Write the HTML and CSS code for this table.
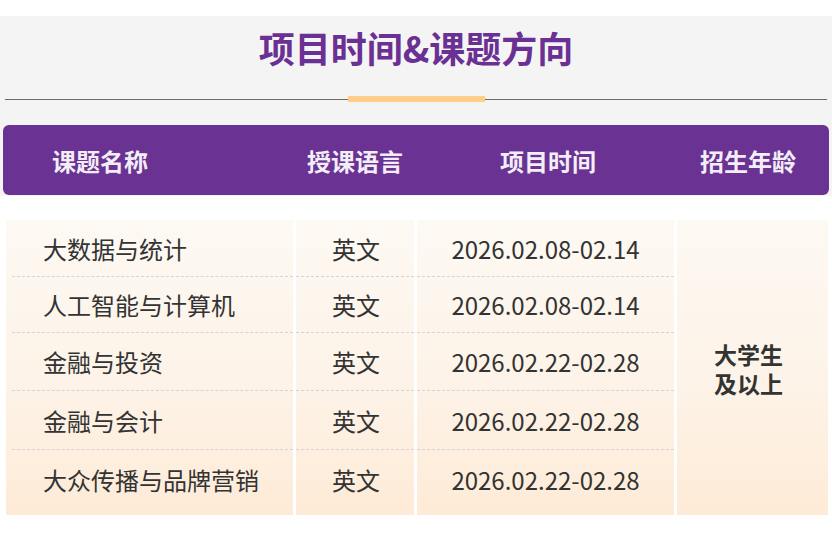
FILE: index.html
```html
<!DOCTYPE html>
<html lang="zh-CN">
<head>
<meta charset="utf-8">
<title>项目时间&amp;课题方向</title>
<link rel="stylesheet" href="styles.css">
</head>
<body>
<section class="intro">
  <h1 class="title">项目时间&amp;课题方向</h1>
  <div class="divider"><span class="divider-line"></span><span class="divider-bar"></span><span class="divider-line"></span></div>
  <div class="head-bar">
    <div class="head-cell">课题名称</div>
    <div class="head-cell">授课语言</div>
    <div class="head-cell">项目时间</div>
    <div class="head-cell">招生年龄</div>
  </div>
</section>
<div class="schedule">
  <div class="col col-name">
    <div class="cell r1">大数据与统计</div>
    <div class="cell r2">人工智能与计算机</div>
    <div class="cell r3">金融与投资</div>
    <div class="cell r4">金融与会计</div>
    <div class="cell r5">大众传播与品牌营销</div>
  </div>
  <div class="col col-lang">
    <div class="cell r1">英文</div>
    <div class="cell r2">英文</div>
    <div class="cell r3">英文</div>
    <div class="cell r4">英文</div>
    <div class="cell r5">英文</div>
  </div>
  <div class="col col-date">
    <div class="cell r1">2026.02.08-02.14</div>
    <div class="cell r2">2026.02.08-02.14</div>
    <div class="cell r3">2026.02.22-02.28</div>
    <div class="cell r4">2026.02.22-02.28</div>
    <div class="cell r5">2026.02.22-02.28</div>
  </div>
  <div class="col col-age">
    <div class="age">
      <div class="age-line">大学生</div>
      <div class="age-line">及以上</div>
    </div>
  </div>
</div>
</body>
</html>
```

FILE: styles.css
```css
* { box-sizing: border-box; }
html, body { margin: 0; padding: 0; background: #ffffff; }
body {
  width: 832px;
  height: 550px;
  overflow: hidden;
  font-family: "Noto Sans CJK SC", "Noto Sans", sans-serif;
  color: #333333;
}
.intro {
  margin-top: 16px;
  background: #f4f4f4;
  padding: 9px 0 1px;
}
.title {
  margin: 0;
  text-align: center;
  font-size: 36px;
  line-height: 44px;
  font-weight: 700;
  color: #6a3093;
}
.divider {
  display: flex;
  align-items: center;
  margin: 27px 5px 0 5px;
  height: 6px;
}
.divider-line {
  flex: 1;
  height: 1px;
  background: #6b6b6b;
}
.divider-bar {
  width: 137px;
  height: 6px;
  background: #ffcf8a;
}
.head-bar {
  margin: 23px 3px 0 3px;
  height: 70px;
  background: #693293;
  border-radius: 6px;
  display: grid;
  grid-template-columns: 255px 193px 200px auto;
  align-items: center;
  padding-left: 49px;
}
.head-cell {
  font-size: 24px;
  font-weight: 700;
  color: #f3eef6;
}
.schedule {
  margin: 24px 0 0 6px;
  width: 822px;
  display: flex;
  gap: 3px;
}
.col {
  background: linear-gradient(180deg, #fdf9f3 0%, #fdf3e8 55%, #feebd7 100%);
}
.col-name { width: 287px; }
.col-lang { width: 118px; }
.col-date { width: 257px; }
.col-age {
  width: 151px;
  display: flex;
  align-items: center;
  justify-content: center;
  padding-right: 8px;
}
.cell {
  display: flex;
  align-items: center;
  font-size: 24px;
  border-bottom: 1px dashed #d4d3d6;
}
.col-lang .cell, .col-date .cell { justify-content: center; }
.col-lang .cell { padding-left: 2px; }
.col-name .cell { margin-left: 6px; padding-left: 31px; }
.r1 { height: 57px; }
.r2 { height: 56px; }
.r3 { height: 58px; }
.r4 { height: 59px; }
.r5 { height: 65px; border-bottom: none; padding-bottom: 6px; }
.age {
  text-align: center;
  color: #333333;
  padding-top: 3px;
}
.age-line {
  font-size: 23px;
  line-height: 29px;
  font-weight: 700;
}
```
